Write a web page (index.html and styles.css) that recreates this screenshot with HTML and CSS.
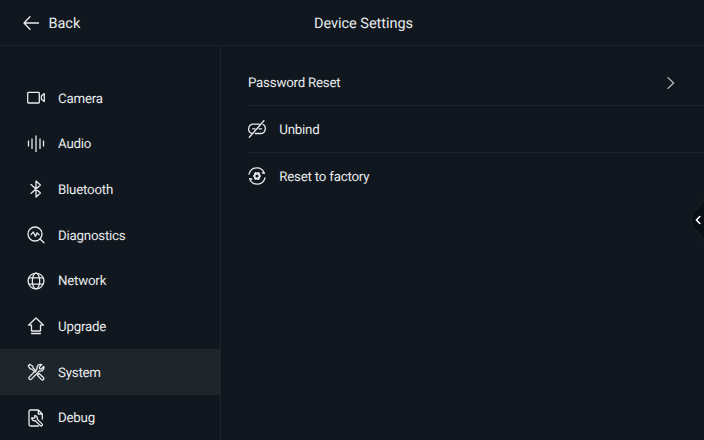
FILE: index.html
```
<!DOCTYPE html>
<html lang="en">
<head>
<meta charset="utf-8">
<title>Device Settings</title>
<link rel="stylesheet" href="styles.css">
</head>
<body>
<div class="app">
  <header class="topbar">
    <div class="back">
      <svg class="back-icon" width="16" height="14" viewBox="0 0 16 14"><path d="M7 .8 1 7l6 6.2M1 7h14.5"/></svg>
      <span>Back</span>
    </div>
    <h1 class="title">Device Settings</h1>
    <div></div>
  </header>
  <div class="body">
    <nav class="sidebar">
      <a class="item">
        <svg class="icon" viewBox="0 0 18 18"><rect x=".7" y="3.4" width="11.6" height="10.6" rx=".8"/><path d="M17.300 4.600v8l-2.900-2.400V7z"/></svg>
        <span>Camera</span>
      </a>
      <a class="item">
        <svg class="icon audio" viewBox="0 0 18 18"><path d="M1.500 5.500v6M5 3.500V14M9 .5V17M13 3.500V14M16.500 5.500v6"/></svg>
        <span>Audio</span>
      </a>
      <a class="item">
        <svg class="icon" viewBox="0 0 18 18"><path d="m4 4.6 9.4 8.4L9 17V1l4.400 4L4 13.400"/></svg>
        <span>Bluetooth</span>
      </a>
      <a class="item">
        <svg class="icon" viewBox="0 0 18 18"><circle cx="8" cy="8" r="7"/><path d="m13 13 4 3.800M4 8.700 6.300 6l2.200 4.400 1.500-3.600 2 2"/></svg>
        <span>Diagnostics</span>
      </a>
      <a class="item">
        <svg class="icon" viewBox="0 0 18 18"><circle cx="9" cy="9" r="7.900"/><ellipse cx="9" cy="9" rx="3.700" ry="7.900"/><path d="M2 5.900h14M2 12.100h14"/></svg>
        <span>Network</span>
      </a>
      <a class="item">
        <svg class="icon" viewBox="0 0 18 18"><path d="M9 1 1.500 8.200h3V14h9V8.200h3zM4.500 16.500h9"/></svg>
        <span>Upgrade</span>
      </a>
      <a class="item active">
        <svg class="icon" viewBox="0 0 18 18"><path d="M1.300 2.800 2.800 1.300l3 1.900.3 1.700 3 3-1.200 1.200-3-3-1.700-.3zM10.700 11.800l1.400-1.300 4.400 4.100c1.100 1.300-.7 3.100-2 2l-4.100-4.300zM14.800 1.500l-2.500 2.600.3 1.600 1.700.3 2.500-2.500c.7 2.600-1.500 5.400-4.500 4.500l-7.900 8.100c-1.400 1.300-3.400-.6-2.200-2L10.100 6c-.8-3 1.900-5.300 4.700-4.500z"/></svg>
        <span>System</span>
      </a>
      <a class="item">
        <svg class="icon" viewBox="0 0 18 18"><path d="M15.300 10V5l-3.900-4H3.500Q2 1 2 2.500v13Q2 17 3.500 17h8M11.300 1v4h4"/><path d="m7.600 6.600.3 2-1.400.8-1.700-.7c-.4 2.200 1.600 3.700 3.500 3l5 4.900c1.300 1 2.700-.4 1.700-1.700l-4.800-4.800c.6-2-.7-3.600-2.600-3.500z"/></svg>
        <span>Debug</span>
      </a>
    </nav>
    <main class="content">
      <div class="row">
        <span>Password Reset</span>
        <svg class="chevron" width="8" height="12" viewBox="0 0 8 12"><path d="m1 .6 5.600 5.400L1 11.400"/></svg>
      </div>
      <div class="row">
        <svg class="icon" viewBox="0 0 18 18"><path d="M11.300 4.200H5.500C-.6 4.200-.6 12.800 3.700 13.200M7.300 13.500H12.500c5.600 0 5.900-7.500 2.700-9M4.700 8.800h2.200M11 8.800h2.500M1.300 17.300 15.900.8"/></svg>
        <span>Unbind</span>
      </div>
      <div class="row">
        <svg class="icon" viewBox="0 0 18 18"><path d="M1 7.200C3-.8 13.500-1.300 16.400 6.300l-2.300-.5M17 10.800C15 18.800 4.500 19.300 1.600 11.700l2.300.5"/><path class="gear" d="m7.300 5.100 1.700.4 1.700-.4 1 1 .4 1.600L13.200 9l-1.100 1.300-.4 1.600-1 1-1.700-.4-1.700.4-1-1-.4-1.600L4.800 9l1.100-1.300.4-1.600zM9 7.400a1.600 1.600 0 1 0 0 3.200 1.600 1.600 0 0 0 0-3.200z"/></svg>
        <span>Reset to factory</span>
      </div>
    </main>
  </div>
  <svg class="drawer" width="14" height="46" viewBox="0 0 14 46"><path class="tab" d="M14.500 0C12 9 5 13 2.500 17Q-.5 23 2.500 29C5 33 12 37 14.500 46z"/><path class="arrow" d="m9.800 19.500-3.400 3.500 3.400 3.500"/></svg>
</div>
</body>
</html>
```
FILE: styles.css
```
* { box-sizing: border-box; }
body {
  margin: 0;
  background: #10171f;
  color: #e9ebec;
  font-family: Roboto, sans-serif;
  font-size: 13.3px;
  letter-spacing: -0.22px;
  text-rendering: geometricPrecision;
}
.app {
  position: relative;
  display: flex;
  flex-direction: column;
  width: 704px;
  height: 440px;
  overflow: hidden;
}
.topbar {
  display: grid;
  grid-template-columns: 1fr auto 1fr;
  align-items: center;
  flex: none;
  height: 46px;
  padding: 0 0 0 23px;
  border-bottom: 1px solid #1c232b;
  font-size: 14.5px;
  letter-spacing: -0.03px;
}
.back { display: flex; align-items: center; gap: 9.5px; }
.title {
  margin: 0;
  font-size: 14.5px;
  font-weight: 400;
}
.topbar span, .title { padding-top: 1px; }
svg {
  flex: none;
  fill: none;
  stroke: #e9ebec;
  stroke-width: 1.3;
  stroke-linecap: round;
  stroke-linejoin: round;
}
.icon { width: 18px; height: 18px; }
.audio { stroke-linecap: butt; }
.body { display: flex; flex: 1; min-height: 0; }
.sidebar {
  flex: none;
  width: 221px;
  padding-top: 29px;
  border-right: 1px solid #1c232b;
}
.item {
  display: flex;
  align-items: center;
  gap: 13px;
  height: 45.7px;
  padding-left: 27px;
}
.item span, .row span { padding-top: 2.6px; }
.active { background: #1e252b; }
.content { flex: 1; padding: 14px 0 0 27px; }
.row {
  display: flex;
  align-items: center;
  gap: 13px;
  height: 46.3px;
  border-bottom: 1px solid #1c232b;
}
.row:last-child { border-bottom: 0; }
.row .icon { margin-right: .3px; }
.chevron { margin: 0 29px 0 auto; stroke: #b9bdc1; }
.gear { fill: #e9ebec; fill-rule: evenodd; stroke: none; }
.drawer { position: absolute; right: 0; top: 197px; }
.tab { fill: #0a1016; stroke: #1a2027; stroke-width: 1; }
.arrow { stroke: #fff; stroke-width: 1.6; }
```
